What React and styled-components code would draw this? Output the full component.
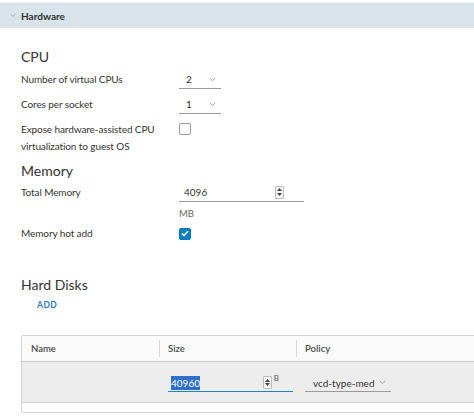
import React from "react";
import styled, { createGlobalStyle } from "styled-components";

const Global = createGlobalStyle`
  html, body { margin: 0; padding: 0; background: #fff; }
  body { font-family: Lato, "Noto Sans", sans-serif; color: #333; overflow: hidden; }
  * { box-sizing: border-box; }
`;

const Page = styled.div`
  width: 474px;
  height: 417px;
  padding-top: 2px;
  overflow: hidden;
`;

const Header = styled.div`
  height: 26px;
  background: #d9e3ea;
  border-top: 1px solid #e9eef2;
  display: flex;
  align-items: center;
  padding-left: 10px;
  gap: 5px;
  font-size: 10px;
  font-weight: 700;
  color: #313131;
`;

const Content = styled.div`
  padding-left: 21px;
`;

const SectionTitle = styled.div`
  font-size: 14px;
  line-height: 20px;
  height: 20px;
  margin-top: ${(p) => p.$mt || 0}px;
  color: #333;
`;

const Row = styled.div`
  display: grid;
  grid-template-columns: 158px auto;
  align-items: ${(p) => (p.$top ? "start" : "center")};
  height: ${(p) => p.$h}px;
  padding-top: ${(p) => p.$pt || 0}px;
  font-size: 10px;
`;

const Label = styled.div`
  line-height: 17px;
  color: #333;
  white-space: nowrap;
  letter-spacing: -0.1px;
`;

const SelectBox = styled.div`
  width: ${(p) => p.$w}px;
  height: 18px;
  border-bottom: 1px solid #9a9a9a;
  display: flex;
  align-items: center;
  justify-content: space-between;
  padding: 0 5px 0 ${(p) => p.$pl || 7}px;
  font-size: ${(p) => p.$fs || 10}px;
  color: #333;
  white-space: nowrap;
`;

const Chevron = ({ color = "#9a9a9a", w = 7 }) => (
  <svg width={w} height="5" viewBox="0 0 7 5">
    <path d="M0.8 1 L3.5 3.7 L6.2 1" fill="none" stroke={color} strokeWidth="0.9" />
  </svg>
);

const Checkbox = styled.div`
  width: 12px;
  height: 12px;
  border-radius: 2px;
  border: 1px solid ${(p) => (p.$checked ? "#0079b8" : "#9a9a9a")};
  background: ${(p) => (p.$checked ? "#0f7fc0" : "#fff")};
  display: flex;
  align-items: center;
  justify-content: center;
  margin-top: ${(p) => p.$mt || 0}px;
`;

const NumInput = styled.div`
  width: ${(p) => p.$w}px;
  height: 18px;
  border-bottom: ${(p) => (p.$focus ? "1.5px solid #1a86c8" : "1px solid #9a9a9a")};
  display: flex;
  align-items: center;
  justify-content: space-between;
  padding: 0 ${(p) => p.$pr || 20}px 0 ${(p) => p.$pl || 5}px;
  font-size: ${(p) => p.$fs || 10}px;
  color: #333;
  position: relative;
`;

const Spinner = styled.div`
  width: 9px;
  height: 13px;
  border: 1px solid #bdbdbd;
  border-radius: 1px;
  background: #f4f4f4;
  display: flex;
  flex-direction: column;
  align-items: center;
  justify-content: space-around;
  padding: 1px 0;
`;

const Tri = ({ up }) => (
  <svg width="5" height="3" viewBox="0 0 5 3">
    <path d={up ? "M0 3 L2.5 0 L5 3 Z" : "M0 0 L2.5 3 L5 0 Z"} fill="#444" />
  </svg>
);

const Unit = styled.div`
  font-size: 9.5px;
  color: #666;
  height: 17px;
  line-height: 17px;
`;

const AddButton = styled.div`
  margin-left: 16px;
  height: 20px;
  line-height: 20px;
  font-size: 8.5px;
  font-weight: 700;
  letter-spacing: 0.5px;
  color: #2d7bb5;
`;

const Table = styled.div`
  margin-top: 20px;
  width: 480px;
  border: 1px solid #d4d4d4;
  border-radius: 2px;
  font-size: 9.5px;
`;

const HeadRow = styled.div`
  display: grid;
  grid-template-columns: 137px 137px 1fr;
  height: 26px;
  background: #fafafa;
  border-bottom: 1px solid #c6c6c6;
`;

const HeadCell = styled.div`
  display: flex;
  align-items: center;
  padding-left: 9px;
  color: #4a4a4a;
  font-weight: 600;
  position: relative;
  &:not(:first-child)::before {
    content: "";
    position: absolute;
    left: 0;
    top: 4px;
    bottom: 4px;
    width: 1px;
    background: #d8d8d8;
  }
`;

const BodyRow = styled.div`
  display: grid;
  grid-template-columns: 137px 137px 1fr;
  height: 41px;
  background: #ededed;
  border-bottom: 1px solid #d6d6d6;
`;

const BodyCell = styled.div`
  display: flex;
  align-items: center;
  padding-left: ${(p) => p.$pl || 9}px;
  padding-top: 2px;
`;

const Footer = styled.div`
  height: 9px;
  background: #fff;
`;

const Selected = styled.span`
  background: #2f6fc9;
  color: #fff;
  padding: 1px 0;
  margin-left: -2px;
`;

const SupUnit = styled.span`
  position: absolute;
  right: 14px;
  top: -1px;
  font-size: 8px;
  color: #555;
`;

const Check = () => (
  <svg width="8" height="7" viewBox="0 0 8 7">
    <path d="M1 3.6 L3 5.5 L7 1.2" fill="none" stroke="#fff" strokeWidth="1.5" />
  </svg>
);

export default function App() {
  return (
    <Page>
      <Global />
      <Header>
        <Chevron color="#8a99a6" w={6} />
        <span>Hardware</span>
      </Header>
      <Content>
        <SectionTitle $mt={19}>CPU</SectionTitle>
        <Row $h={25}>
          <Label>Number of virtual CPUs</Label>
          <SelectBox $w={42}>
            <span>2</span>
            <Chevron />
          </SelectBox>
        </Row>
        <Row $h={25}>
          <Label>Cores per socket</Label>
          <SelectBox $w={42}>
            <span>1</span>
            <Chevron />
          </SelectBox>
        </Row>
        <Row $h={44} $top $pt={4}>
          <Label>
            Expose hardware-assisted CPU
            <br />
            virtualization to guest OS
          </Label>
          <Checkbox $mt={2} />
        </Row>
        <SectionTitle>Memory</SectionTitle>
        <Row $h={23}>
          <Label>Total Memory</Label>
          <NumInput $w={125} $pr={20}>
            <span>4096</span>
            <Spinner>
              <Tri up />
              <Tri />
            </Spinner>
          </NumInput>
        </Row>
        <Row $h={18}>
          <span />
          <Unit>MB</Unit>
        </Row>
        <Row $h={23}>
          <Label>Memory hot add</Label>
          <Checkbox $checked>
            <Check />
          </Checkbox>
        </Row>
        <SectionTitle $mt={30}>Hard Disks</SectionTitle>
        <AddButton>ADD</AddButton>
        <Table>
          <HeadRow>
            <HeadCell>Name</HeadCell>
            <HeadCell>Size</HeadCell>
            <HeadCell>Policy</HeadCell>
          </HeadRow>
          <BodyRow>
            <BodyCell />
            <BodyCell>
              <NumInput $w={125} $focus $pr={21} $fs={10}>
                <Selected>40960</Selected>
                <Spinner>
                  <Tri up />
                  <Tri />
                </Spinner>
                <SupUnit>B</SupUnit>
              </NumInput>
            </BodyCell>
            <BodyCell>
              <SelectBox $w={86} $pl={8} $fs={10}>
                <span>vcd-type-med</span>
                <Chevron />
              </SelectBox>
            </BodyCell>
          </BodyRow>
          <Footer />
        </Table>
      </Content>
    </Page>
  );
}
